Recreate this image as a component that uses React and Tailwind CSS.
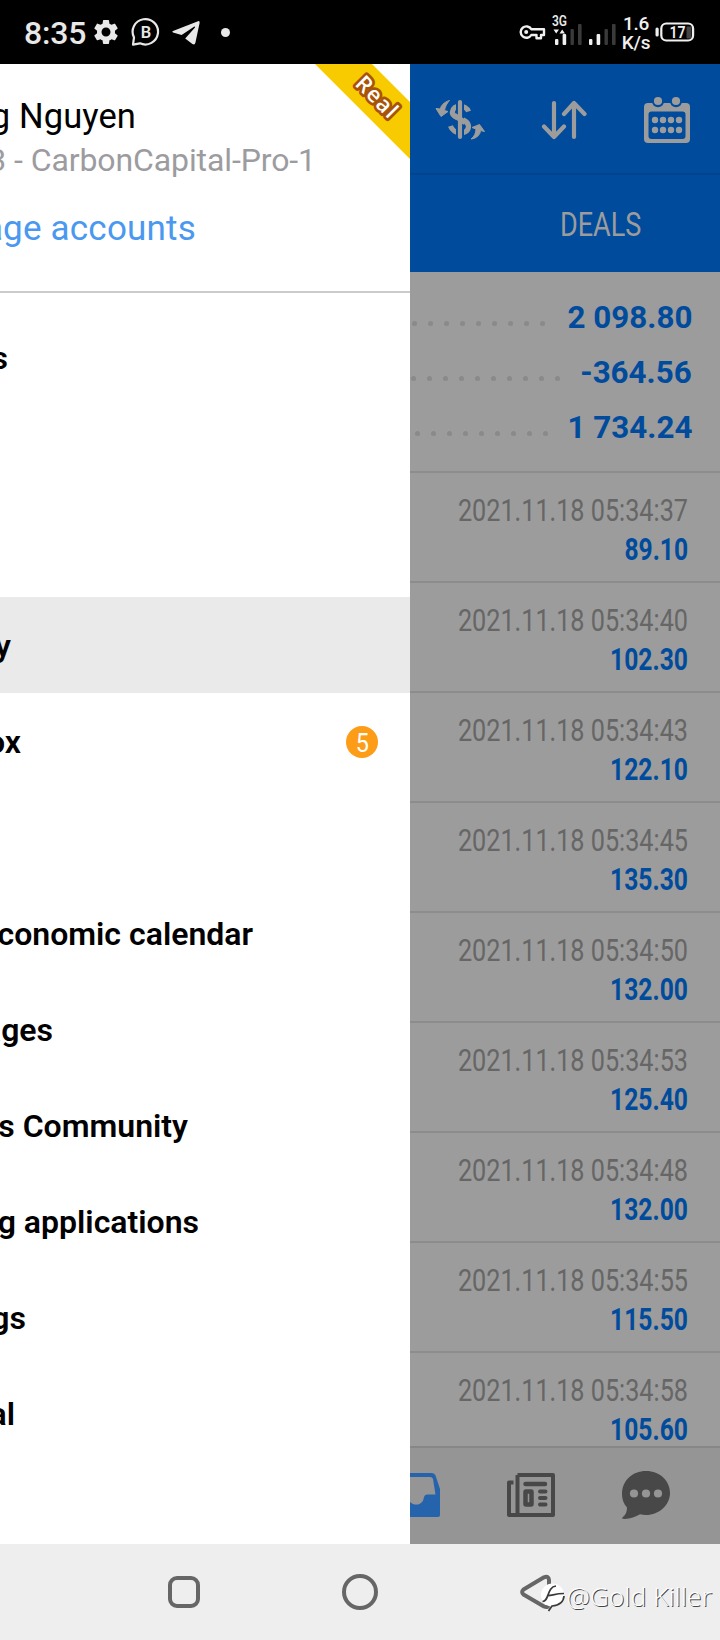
import React from 'react';
import { MdSettings } from 'react-icons/md';

// Side menu rows, text is cut by the left edge while the drawer slides
const menuItems = [
  { id: 'quotes', label: 's', width: 'w-[8px]' },
  { id: 'charts', label: '', width: 'w-0' },
  { id: 'trade', label: '', width: 'w-0' },
  { id: 'history', label: 'y', width: 'w-[11px]', active: true },
  { id: 'mailbox', label: 'ox', width: 'w-[21px]', badge: 5 },
  { id: 'news', label: '', width: 'w-0' },
  { id: 'calendar', label: 'conomic calendar', width: 'w-[253px]' },
  { id: 'messages', label: 'ages', width: 'w-[53px]' },
  { id: 'community', label: 's Community', width: 'w-[188px]' },
  { id: 'apps', label: 'g applications', width: 'w-[199px]' },
  { id: 'settings', label: 'gs', width: 'w-[26px]' },
  { id: 'journal', label: 'al', width: 'w-[15px]' },
];

const summary = [
  { value: '2 098.80', dots: 9, space: 'mr-[20px]' },
  { value: '-364.56', dots: 10, space: 'mr-[18px]' },
  { value: '1 734.24', dots: 9, space: 'mr-[17px]' },
];

const deals = [
  { time: '2021.11.18 05:34:37', profit: '89.10' },
  { time: '2021.11.18 05:34:40', profit: '102.30' },
  { time: '2021.11.18 05:34:43', profit: '122.10' },
  { time: '2021.11.18 05:34:45', profit: '135.30' },
  { time: '2021.11.18 05:34:50', profit: '132.00' },
  { time: '2021.11.18 05:34:53', profit: '125.40' },
  { time: '2021.11.18 05:34:48', profit: '132.00' },
  { time: '2021.11.18 05:34:55', profit: '115.50' },
  { time: '2021.11.18 05:34:58', profit: '105.60' },
];

const SignalBars = () => (
  <svg width="28" height="22" viewBox="0 0 28 22">
    <rect x="0" y="16" width="3.4" height="6" rx="1" fill="#f0f0f0" />
    <rect x="7.6" y="11" width="3.6" height="11" rx="1" fill="#f0f0f0" />
    <rect x="15.5" y="6" width="3.4" height="16" rx="1" fill="#3a3a3a" />
    <rect x="23" y="1" width="3.6" height="21" rx="1" fill="#3a3a3a" />
  </svg>
);

const StatusBar = () => (
  <div className="flex h-16 shrink-0 items-center bg-black pl-[24px] text-[#e8e8e8]">
    <span className="w-[67px] pt-0.5 text-[32px] leading-[62px] font-medium tracking-[-0.2px] whitespace-nowrap">
      8:35
    </span>
    <MdSettings className="size-[30px]" />
    <svg className="ml-[10px]" width="30" height="30" viewBox="0 0 30 30">
      <path
        d="M2 27.600 3 20.500A12.700 12.700 0 1 1 9 26.300Z"
        fill="none"
        stroke="#e8e8e8"
        strokeWidth="2.2"
        strokeLinejoin="round"
      />
      <text x="15" y="20.800" textAnchor="middle" fontSize="16.500" fontWeight="600" fill="#e8e8e8">
        B
      </text>
    </svg>
    <svg className="ml-[10px] mt-0.5" width="30" height="26" viewBox="0 0 30 26">
      <path d="M2 11 27 1.2Q29 .6 28.6 3L24.4 22.8Q23.8 25.4 21.4 24L14.2 18.4 24 7.4Q24.400 6 23 6.700L10.600 14.900 2 12.400Q.4 11.800 2 11Z" fill="#e8e8e8" />
    </svg>
    <div className="ml-[20px] size-[9px] rounded-full bg-[#e8e8e8]" />

    <div className="ml-auto flex items-center pr-[24px]">
      <svg width="27" height="18" viewBox="0 0 27 18">
        <path
          d="M12.300 6.200H25V12H22V15.200H17.500V12H12.300A5.700 5.700 0 1 1 12.300 6.200Z"
          fill="none"
          stroke="#f0f0f0"
          strokeWidth="2.400"
          strokeLinejoin="round"
        />
        <circle cx="7.200" cy="9" r="2" fill="#f0f0f0" />
      </svg>
      <div className="relative ml-[9px] flex h-[32px] items-end pb-[3px]">
        <span className="absolute -top-[2px] -left-[3px] origin-left scale-x-[0.800] text-[15px] leading-[15px] font-semibold">
          3G
        </span>
        <svg className="absolute top-[13px] -left-[2px]" width="13" height="5" viewBox="0 0 13 5">
          <path d="M.5 .5H6L3.200 4.500ZM6.500 4.500H12L9.200 .5Z" fill="#f0f0f0" />
        </svg>
        <SignalBars />
      </div>
      <div className="ml-[6px] flex h-[32px] items-end pb-[3px]">
        <SignalBars />
      </div>
      <div className="ml-[4px] flex w-[30px] flex-col items-center pt-[2px] text-[19px] leading-[19px] font-medium tracking-[-0.300px] text-[#f0f0f0]">
        <span>1.6</span>
        <span>K/s</span>
      </div>
      <svg className="ml-[4px]" width="41" height="21" viewBox="0 0 41 21">
        <rect x="0.500" y="5.500" width="3.200" height="9" rx="1.500" fill="#f0f0f0" />
        <rect x="31.500" y="4.500" width="5" height="12" rx="1" fill="#444" />
        <rect x="6.300" y="1.500" width="31.800" height="17" rx="5" fill="none" stroke="#f0f0f0" strokeWidth="2.200" />
        <text x="22.500" y="15.600" textAnchor="middle" fontSize="16" fontWeight="600" fill="#f0f0f0" textLength="16" lengthAdjust="spacingAndGlyphs">
          17
        </text>
      </svg>
    </div>
  </div>
);

const Ribbon = () => (
  <svg className="absolute top-0 right-0" width="96" height="96" viewBox="0 0 96 96">
    <path d="M1 0H58L96 38V95Z" fill="#f8cb00" />
    <text
      transform="translate(63.500 33) rotate(45)"
      textAnchor="middle"
      y="8"
      fontSize="22"
      fontWeight="600"
      letterSpacing="1.300"
      fill="#fff"
      stroke="#a95308"
      strokeWidth="5.500"
      strokeLinejoin="round"
      paintOrder="stroke"
      fontFamily="Open Sans, sans-serif"
    >
      Real
    </text>
  </svg>
);

const Drawer = () => (
  <div className="relative flex w-[410px] shrink-0 flex-col overflow-hidden bg-white">
    <Ribbon />
    <div className="flex h-[229px] shrink-0 flex-col border-b-2 border-[#cbcbcb] pt-[30px] whitespace-nowrap">
      <div className="flex h-[45px] w-[136px] items-center justify-end text-[34.500px] tracking-[0.100px] text-black">
        g Nguyen
      </div>
      <div className="flex h-[41px] w-[316px] items-center justify-end text-[32px] tracking-[-0.100px] text-[#9c9c9f]">
        3 - CarbonCapital-Pro-1
      </div>
      <div className="mt-[27px] flex h-[44px] w-[196px] items-center justify-end text-[35px] tracking-[0.200px] text-[#4a98f0]">
        age accounts
      </div>
    </div>
    <div className="mt-4 flex flex-col">
      {menuItems.map((item) => (
        <div
          key={item.id}
          className={`flex h-24 items-center justify-between pr-[32px] ${item.active ? 'bg-[#eaeaea]' : ''}`}
        >
          <div
            className={`flex justify-end pt-0.5 text-[32px] font-semibold whitespace-nowrap text-black ${item.width}`}
          >
            {item.label}
          </div>
          {item.badge && (
            <div className="mt-0.5 flex size-8 items-center justify-center rounded-full bg-[#fd9c17] text-[26px] leading-8 text-white">
              <span className="scale-x-90 pt-px">{item.badge}</span>
            </div>
          )}
        </div>
      ))}
    </div>
  </div>
);

const Toolbar = () => (
  <div className="flex h-[111px] items-center justify-between border-b-2 border-[#00448e] pt-[3px] pr-[29px] pl-[25px]">
    <svg width="50" height="50" viewBox="0 0 50 50" fill="none" stroke="#9c9c9c">
      <path d="M33.500 16.500C31 9.500 18 9 17.300 17.200C17 24.500 33.500 22.500 33.500 31.500C33 40.500 18.500 40 15.500 31" strokeWidth="5.200" />
      <path d="M25 6V42" stroke="#004b9c" strokeWidth="8" />
      <path d="M19.500 20.500 30 27.500" strokeWidth="5.200" />
      <path d="M25 7V42" strokeWidth="4.200" strokeLinecap="round" />
      <path d="M14.500 5.500C9 7 5.500 11 5.500 14L1 13.500 6 21.500 13 16.500 9.500 15.500C10 12 12 8 14.500 5.500Z" fill="#9c9c9c" strokeWidth="1" strokeLinejoin="round" />
      <path d="M36 44C42 43.500 45.500 39 45.500 35.500L49.500 36.500 44.500 29.500 37 32.500 41 34C41 38 39 42 36 44Z" fill="#9c9c9c" strokeWidth="1" strokeLinejoin="round" />
    </svg>
    <svg width="46" height="40" viewBox="0 0 46 40" fill="none" stroke="#9c9c9c" strokeWidth="4.200" strokeLinecap="round" strokeLinejoin="round">
      <path d="M13 3V37M3 26.500 13 37 23 26.500M33 37V3M23 14 33 3 43.500 14" />
    </svg>
    <svg width="48" height="48" viewBox="0 0 48 48">
      <path d="M5 7H43Q47 7 47 11V43Q47 47 43 47H5Q1 47 1 43V11Q1 7 5 7Z" fill="#9c9c9c" />
      <rect x="5.500" y="15.500" width="37" height="27.500" rx="3" fill="#004b9c" />
      <circle cx="15" cy="5" r="6.200" fill="#004b9c" />
      <circle cx="33" cy="5" r="6.200" fill="#004b9c" />
      <circle cx="15" cy="5" r="4.100" fill="#9c9c9c" />
      <circle cx="33" cy="5" r="4.100" fill="#9c9c9c" />
      {[12, 20, 28, 36].map((x) => (
        <React.Fragment key={x}>
          <circle cx={x} cy="24" r="3.200" fill="#9c9c9c" />
          <circle cx={x} cy="34" r="3.200" fill="#9c9c9c" />
        </React.Fragment>
      ))}
    </svg>
  </div>
);

const BottomBar = () => (
  <div className="flex h-[98px] shrink-0 items-center border-t-2 border-[#878787] bg-[#959595] pb-0.5">
    <svg width="31" height="46" viewBox="0 0 31 46">
      <path d="M0 1H22Q24.500 1 25.500 3.500L30 17V43Q30 45 28 45H0Z" fill="#2563ac" />
      <path d="M0 5H20Q22.500 5 23 7L25.500 22.500H17Q14.500 22.500 14 25C13 34 4 34 0 30Z" fill="#959595" />
    </svg>
    <svg className="ml-[65px]" width="50" height="46" viewBox="0 0 50 46" fill="none" stroke="#484848">
      <path d="M11.500 3H47V43H3V10.500H7.500" strokeWidth="4" strokeLinejoin="round" />
      <path d="M11.500 3V43" strokeWidth="4" />
      <path d="M19.500 12H39" strokeWidth="4.500" strokeLinecap="round" />
      <path d="M34 19.500H39.500M34 26H39.500M34 32.500H39.500" strokeWidth="4" strokeLinecap="round" />
      <rect x="19.500" y="19.500" width="6" height="13" rx="0.500" strokeWidth="4.500" />
    </svg>
    <svg className="ml-[65px]" width="50" height="50" viewBox="0 0 50 50">
      <path d="M25 1C39 1 49 11 49 23S38 45 25 45Q22 45 19 44.300C14 47 8 49.500 1.500 48.800C1 48.500 1 48 1.500 47.500C5 44.500 6 41.500 6 37.500C2.500 33.500 1 29 1 24C1 10.500 11.500 1 25 1Z" fill="#484848" />
      <circle cx="13" cy="23.500" r="4.100" fill="#959595" />
      <circle cx="25" cy="23.500" r="4.100" fill="#959595" />
      <circle cx="37" cy="23.500" r="4.100" fill="#959595" />
    </svg>
  </div>
);

// History screen dimmed behind the drawer
const HistoryScreen = () => (
  <div className="flex w-[310px] flex-col overflow-hidden bg-[#9c9c9c]">
    <div className="h-[208px] shrink-0 bg-[#004b9c]">
      <Toolbar />
      <div className="flex h-[97px] items-center justify-center pt-[3px] pl-[72px]">
        <span className="scale-x-[0.820] text-[33px] text-[#9c9c9c]">DEALS</span>
      </div>
    </div>
    <div className="h-[201px] shrink-0 border-b-2 border-[#8c8c8c] pt-[17px] pr-[28px]">
      {summary.map((row) => (
        <div key={row.value} className="flex h-[55px] items-center justify-end">
          <div className={`mt-[14px] flex gap-[11px] ${row.space}`}>
            {Array.from({ length: row.dots }).map((_, i) => (
              <span key={i} className="size-[5px] rounded-full bg-[#8a8a8a]" />
            ))}
          </div>
          <span className="origin-right scale-x-[0.980] text-[32px] font-bold text-[#004b9c]">{row.value}</span>
        </div>
      ))}
    </div>
    <div className="flex-1 overflow-hidden">
      {deals.map((deal) => (
        <div
          key={deal.time}
          className="flex h-[110px] flex-col items-end border-b-2 border-[#8c8c8c] pt-[19px] pr-[32px] whitespace-nowrap"
        >
          <span className="origin-right scale-x-[0.813] text-[31px] leading-[38px] text-[#666]">{deal.time}</span>
          <span className="origin-right scale-x-[0.795] text-[31px] leading-[40px] font-bold text-[#004b9c]">
            {deal.profit}
          </span>
        </div>
      ))}
    </div>
    <BottomBar />
  </div>
);

const NavBar = () => (
  <div className="relative flex h-24 shrink-0 items-center bg-[#eee] pl-[168px]">
    <div className="size-8 rounded-[9px] border-4 border-[#666]" />
    <div className="ml-[142px] size-9 rounded-full border-4 border-[#666]" />
    <svg className="ml-[142px]" width="32" height="36" viewBox="0 0 32 36">
      <path
        d="M3.500 15.500 24 3.300Q28.500 1.500 29 6V30Q28.500 34.500 24 32.500L3.500 20.500Q.8 18 3.500 15.500Z"
        fill="none"
        stroke="#666"
        strokeWidth="4"
        strokeLinejoin="round"
      />
    </svg>
    {/* author signature */}
    <div className="absolute top-[35px] right-[8px] flex items-center">
      <svg width="27" height="34" viewBox="0 0 27 34">
        <circle cx="12.500" cy="16" r="11.500" fill="#fff" />
        <path
          d="M2.500 22.500C9.500 22.500 6.500 8 16 7M7 16.500C12 17 14 14.500 24 14.500M24 17C23.500 24.500 17.500 26.500 12 27L8.500 32"
          fill="none"
          stroke="#3a3a3a"
          strokeWidth="1.700"
        />
      </svg>
      <span className="font-['Open_Sans',sans-serif] text-[26px] leading-[31px] font-light tracking-[0.250px] whitespace-nowrap text-white [text-shadow:1px_1px_0_#444]">
        @Gold Killer
      </span>
    </div>
  </div>
);

const App = () => (
  <div className="flex h-[1640px] w-[720px] flex-col overflow-hidden bg-white font-[Roboto,sans-serif]">
    <StatusBar />
    <div className="flex h-[1480px] shrink-0">
      <Drawer />
      <HistoryScreen />
    </div>
    <NavBar />
  </div>
);

export default App;
